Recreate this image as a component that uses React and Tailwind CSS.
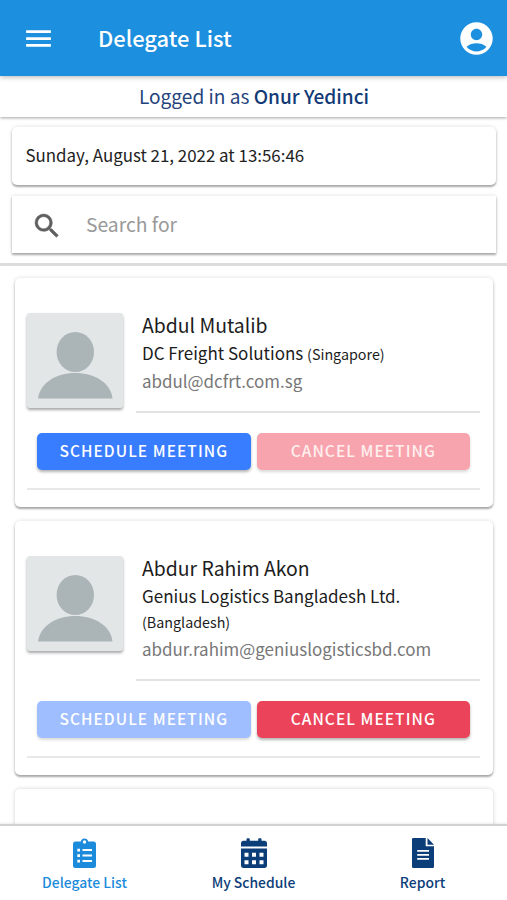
import React, { useState } from 'react';
import { MdMenu, MdAccountCircle, MdSearch } from 'react-icons/md';

/* ===============================
   TAB ICONS
=============================== */

const ClipboardIcon = () => (
  <svg width="23" height="30" viewBox="0 0 23 30" fill="currentColor" fillRule="evenodd">
    <path d="M2.500 3.500H7.800A3.800 3.800 0 0 1 15.200 3.500H20.500A2.500 2.500 0 0 1 23 6V27.500A2.500 2.500 0 0 1 20.500 30H2.500A2.500 2.500 0 0 1 0 27.500V6A2.500 2.500 0 0 1 2.500 3.500ZM11.500 2.300A1.700 1.700 0 1 0 11.500 5.700A1.700 1.700 0 1 0 11.500 2.300ZM4.300 10.800H7V13.400H4.300ZM9.500 11.100H19V13.100H9.500ZM4.300 16.300H7V18.900H4.300ZM9.500 16.600H19V18.600H9.500ZM4.300 21.800H7V24.400H4.300ZM9.500 22.100H19V24.100H9.500Z" />
  </svg>
);

const CalendarIcon = () => (
  <svg width="26" height="30" viewBox="0 0 26 30" fill="currentColor" fillRule="evenodd">
    <path d="M5.500 2.800V1.200A1 1 0 0 1 6.500 0.200H7.800A1 1 0 0 1 8.800 1.200V2.800H17.200V1.200A1 1 0 0 1 18.200 0.200H19.500A1 1 0 0 1 20.500 1.200V2.800H23.300A2.700 2.700 0 0 1 26 5.500V8.500H0V5.500A2.700 2.700 0 0 1 2.700 2.800Z" />
    <path d="M0 10.500H26V27.300A2.700 2.700 0 0 1 23.300 30H2.700A2.700 2.700 0 0 1 0 27.300ZM3.500 14.700H7.500V18.700H3.500ZM11 14.700H15V18.700H11ZM18.500 14.700H22.500V18.700H18.500ZM3.500 22.200H7.500V26.200H3.500ZM11 22.200H15V26.200H11ZM18.500 22.200H22.500V26.200H18.500Z" />
  </svg>
);

const ReportIcon = () => (
  <svg width="22" height="30" viewBox="0 0 22 30" fill="currentColor" fillRule="evenodd">
    <path d="M1.200 0H13.700V8.300H22V28.800A1.200 1.200 0 0 1 20.800 30H1.200A1.200 1.200 0 0 1 0 28.800V1.200A1.200 1.200 0 0 1 1.200 0ZM5.200 12H17V13.700H5.200ZM5.200 16H17V17.700H5.200ZM5.200 20H17V21.700H5.200Z" />
    <path d="M15.500 0L22 6.700H15.500Z" />
  </svg>
);

const delegates = [
  {
    id: 1,
    name: 'Abdul Mutalib',
    company: 'DC Freight Solutions',
    country: 'Singapore',
    email: 'abdul@dcfrt.com.sg',
    scheduled: false
  },
  {
    id: 2,
    name: 'Abdur Rahim Akon',
    company: 'Genius Logistics Bangladesh Ltd.',
    country: 'Bangladesh',
    email: 'abdur.rahim@geniuslogisticsbd.com',
    scheduled: true
  }
];

const tabs = [
  { id: 'delegates', label: 'Delegate List', icon: ClipboardIcon },
  { id: 'schedule', label: 'My Schedule', icon: CalendarIcon },
  { id: 'report', label: 'Report', icon: ReportIcon }
];

const Avatar = () => (
  <div className="w-24 h-[95px] shrink-0 rounded-[3px] bg-[#e2e6e7] shadow-[0_2px_3px_rgba(0,0,0,0.35)] overflow-hidden">
    <svg viewBox="0 0 96 95" className="w-full h-full" fill="#abb4b7">
      <ellipse cx="48.300" cy="39" rx="18.700" ry="20" />
      <path d="M11 85.500C13 70 29 60 48.300 60S84 70 85.500 85.500Z" />
    </svg>
  </div>
);

const DelegateCard = ({ delegate, onToggle }) => {
  const { name, company, country, email, scheduled } = delegate;

  return (
    <div className="rounded-[5px] bg-white pl-3 pr-[13px] pt-[33px] pb-[17px] shadow-[0_2px_2px_rgba(0,0,0,0.3),0_0_4px_rgba(0,0,0,0.14)]">
      <div className="flex items-start">
        <div className="pt-0.5">
          <Avatar />
        </div>
        <div className="ml-[13px] flex-1 border-b-2 border-[#e3e3e3] pl-1.5 pb-4">
          <h2 className="text-[19.400px] leading-[28px] text-[#1c1c1c]">{name}</h2>
          <p className="mt-px mb-px pr-6 text-[17px] leading-[25px] text-[#1c1c1c]">
            {company} <span className="inline-block text-[14.300px]">({country})</span>
          </p>
          <p className="text-[16.950px] leading-[28px] text-[#777]">{email}</p>
        </div>
      </div>

      <div className="mt-5 flex gap-1.5 border-b-2 border-[#e8e8e8] px-2.5 pb-[18px]">
        <button
          onClick={onToggle}
          disabled={scheduled}
          className="h-[37px] flex-1 rounded-[5px] bg-[#387dff] pb-0.5 text-[15.500px] font-medium tracking-[1.050px] text-white shadow-[0_2px_3px_rgba(0,0,0,0.3)] disabled:bg-[#9fbeff] disabled:shadow-[0_2px_3px_rgba(0,0,0,0.15)]"
        >
          SCHEDULE MEETING
        </button>
        <button
          onClick={onToggle}
          disabled={!scheduled}
          className="h-[37px] flex-1 rounded-[5px] bg-[#eb445a] pb-0.5 text-[15.500px] font-medium tracking-[1.050px] text-white shadow-[0_2px_3px_rgba(0,0,0,0.3)] disabled:bg-[#f8a4af] disabled:text-[#fff0ee] disabled:shadow-[0_2px_3px_rgba(0,0,0,0.15)]"
        >
          CANCEL MEETING
        </button>
      </div>
    </div>
  );
};

const App = () => {
  const [list, setList] = useState(delegates);
  const [activeTab, setActiveTab] = useState('delegates');
  const [search, setSearch] = useState('');

  const toggleMeeting = (id) => {
    setList(prev => prev.map(d => (d.id === id ? { ...d, scheduled: !d.scheduled } : d)));
  };

  return (
    <div className="flex h-[900px] w-full flex-col overflow-hidden bg-white font-['Noto_Sans_CJK_SC',sans-serif]">
      {/* Header */}
      <header className="z-10 flex h-[76px] shrink-0 items-center bg-[#1c8fde] pl-[22px] pr-[11px] text-white shadow-[0_1px_5px_rgba(0,0,0,0.3)]">
        <MdMenu size={33} />
        <h1 className="ml-[43px] flex-1 pt-px text-[21.900px] font-medium">Delegate List</h1>
        <MdAccountCircle size={39} />
      </header>

      <div className="z-[5] h-[41px] shrink-0 bg-white pl-px text-center text-[19.100px] leading-[41px] text-[#25437c] shadow-[0_1px_3px_rgba(0,0,0,0.35)]">
        Logged in as <span className="font-medium text-[#113a76]">Onur Yedinci</span>
      </div>

      {/* Date and search */}
      <div className="h-[149px] shrink-0 border-b-[3px] border-[#dcdcdc] pl-3 pr-[11px] pt-2.5">
        <div className="h-[58px] rounded-[5px] bg-white pl-[13.500px] text-[16.900px] leading-[56px] text-[#222] shadow-[0_2px_2px_rgba(0,0,0,0.3),0_0_4px_rgba(0,0,0,0.14)]">
          Sunday, August 21, 2022 at 13:56:46
        </div>
        <div className="mt-[11px] flex h-[57px] items-center bg-white pl-[19px] shadow-[0_2px_2px_rgba(0,0,0,0.3),0_0_4px_rgba(0,0,0,0.14)]">
          <MdSearch size={32} className="mt-0.5 text-[#5f5f5f] [&>path:last-child]:stroke-[0.4] [&>path:first-child]:stroke-none" />
          <input
            value={search}
            onChange={(e) => setSearch(e.target.value)}
            placeholder="Search for"
            className="ml-[23px] flex-1 text-[19.300px] text-[#333] outline-none placeholder:text-[#999]"
          />
        </div>
      </div>

      {/* Delegates */}
      <main className="flex min-h-0 flex-1 flex-col gap-3.5 overflow-hidden pl-[15px] pr-3.5 pt-3">
        {list.map(d => (
          <DelegateCard key={d.id} delegate={d} onToggle={() => toggleMeeting(d.id)} />
        ))}
        <div className="h-32 shrink-0 rounded-[5px] bg-white pl-3 pr-[13px] pt-[37px] shadow-[0_0_4px_rgba(0,0,0,0.18)]">
          <Avatar />
        </div>
      </main>

      {/* Tab bar */}
      <nav className="z-10 flex h-[76px] shrink-0 border-t-2 border-[#d2d2d2] bg-white shadow-[0_-1px_2px_rgba(0,0,0,0.08)]">
        {tabs.map(({ id, label, icon: Icon }) => (
          <button
            key={id}
            onClick={() => setActiveTab(id)}
            className={`flex flex-1 flex-col items-center pt-3 ${activeTab === id ? 'text-[#1c8bdb]' : 'text-[#0b3d78]'}`}
          >
            <Icon />
            <span className="mt-1 text-[13.900px] font-medium leading-[20px]">{label}</span>
          </button>
        ))}
      </nav>
    </div>
  );
};

export default App;
